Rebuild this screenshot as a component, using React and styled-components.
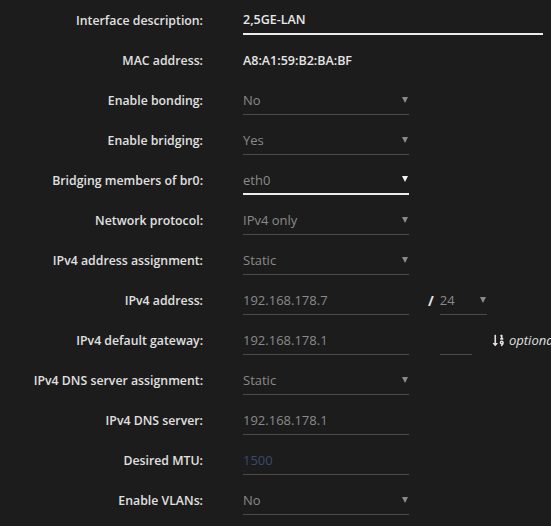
import React from "react"
import styled, { createGlobalStyle } from "styled-components"
import { FaSortNumericDown } from "react-icons/fa"

const GlobalStyle = createGlobalStyle`
  html, body {
    margin: 0;
    background: #1c1c1c;
  }
  body {
    font-family: "Open Sans", "Noto Sans", sans-serif;
    font-size: 12.5px;
    overflow: hidden;
  }
`

const Form = styled.div`
  display: flex;
  flex-direction: column;
  width: 551px;
`

const Row = styled.div`
  display: flex;
  align-items: center;
  height: 40px;
  gap: 40px;
`

const Label = styled.div`
  width: 203px;
  flex: none;
  text-align: right;
  color: #e0e0e0;
  font-weight: 600;
  font-size: 12.3px;
`

const Controls = styled.div`
  display: flex;
  align-items: center;
  flex: 1;
  min-width: 0;
`

const Field = styled.div`
  position: relative;
  display: flex;
  align-items: center;
  box-sizing: border-box;
  width: ${p => p.$width || 166}px;
  height: 30px;
  padding-top: 1px;
  border-bottom: ${p => (p.$active ? "2px solid #ececec" : "1px solid #4a4a4a")};
  color: ${p => (p.$placeholder ? "#3b4b6b" : p.$bright ? "#e8e8e8" : "#8a8a8a")};
  font-weight: ${p => (p.$bright ? 600 : 400)};
  font-size: ${p => (p.$bright ? 12.5 : 13)}px;
  flex: none;
`

const Static = styled.div`
  color: #e4e4e4;
  font-weight: 600;
`

const Arrow = styled.span`
  position: absolute;
  right: 1px;
  top: 50%;
  margin-top: -3px;
  width: 0;
  height: 0;
  border-left: 3.5px solid transparent;
  border-right: 3.5px solid transparent;
  border-top: 6px solid ${p => (p.$active ? "#f2f2f2" : "#8a8a8a")};
`

const Slash = styled.span`
  margin: 0 6px 0 19px;
  color: #e6e6e6;
  font-weight: 700;
  font-size: 14px;
`

const Optional = styled.span`
  display: flex;
  align-items: center;
  gap: 4px;
  margin-left: 20px;
  color: #e0e0e0;
  font-style: italic;
  white-space: nowrap;
  font-size: 13px;
`

const Select = ({ value, active, width }) => (
  <Field $active={active} $width={width}>
    {value}
    <Arrow $active={active} />
  </Field>
)

export default function App() {
  return (
    <>
      <GlobalStyle />
      <Form>
        <Row>
          <Label>Interface description:</Label>
          <Controls>
            <Field $active $bright $width={300}>2,5GE-LAN</Field>
          </Controls>
        </Row>
        <Row>
          <Label>MAC address:</Label>
          <Controls>
            <Static>A8:A1:59:B2:BA:BF</Static>
          </Controls>
        </Row>
        <Row>
          <Label>Enable bonding:</Label>
          <Controls><Select value="No" /></Controls>
        </Row>
        <Row>
          <Label>Enable bridging:</Label>
          <Controls><Select value="Yes" /></Controls>
        </Row>
        <Row>
          <Label>Bridging members of br0:</Label>
          <Controls><Select value="eth0" active /></Controls>
        </Row>
        <Row>
          <Label>Network protocol:</Label>
          <Controls><Select value="IPv4 only" /></Controls>
        </Row>
        <Row>
          <Label>IPv4 address assignment:</Label>
          <Controls><Select value="Static" /></Controls>
        </Row>
        <Row>
          <Label>IPv4 address:</Label>
          <Controls>
            <Field>192.168.178.7</Field>
            <Slash>/</Slash>
            <Select value="24" width={47} />
          </Controls>
        </Row>
        <Row>
          <Label>IPv4 default gateway:</Label>
          <Controls>
            <Field>192.168.178.1</Field>
            <Field $width={32} style={{ marginLeft: 31 }} />
            <Optional>
              <FaSortNumericDown size={13} />
              optional
            </Optional>
          </Controls>
        </Row>
        <Row>
          <Label>IPv4 DNS server assignment:</Label>
          <Controls><Select value="Static" /></Controls>
        </Row>
        <Row>
          <Label>IPv4 DNS server:</Label>
          <Controls><Field>192.168.178.1</Field></Controls>
        </Row>
        <Row>
          <Label>Desired MTU:</Label>
          <Controls><Field $placeholder>1500</Field></Controls>
        </Row>
        <Row>
          <Label>Enable VLANs:</Label>
          <Controls><Select value="No" /></Controls>
        </Row>
      </Form>
    </>
  )
}
